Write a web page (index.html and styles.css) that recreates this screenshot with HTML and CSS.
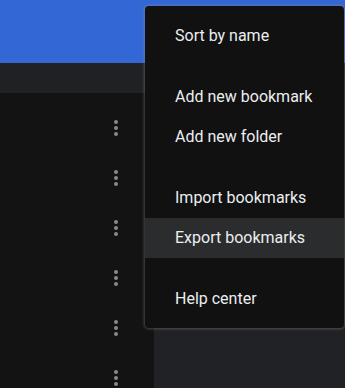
FILE: index.html
```html
<!DOCTYPE html>
<html lang="en">
<head>
  <meta charset="UTF-8">
  <title>Bookmarks</title>
  <link rel="stylesheet" href="styles.css">
</head>
<body>
  <div class="page">
    <header class="topbar"></header>
    <div class="toolbar"></div>
    <main class="content">
      <ul class="list">
        <li class="row"><span class="more"><i></i><i></i><i></i></span></li>
        <li class="row"><span class="more"><i></i><i></i><i></i></span></li>
        <li class="row"><span class="more"><i></i><i></i><i></i></span></li>
        <li class="row"><span class="more"><i></i><i></i><i></i></span></li>
        <li class="row"><span class="more"><i></i><i></i><i></i></span></li>
        <li class="row"><span class="more"><i></i><i></i><i></i></span></li>
      </ul>
      <aside class="side"></aside>
    </main>

    <div class="menu">
      <div class="item">Sort by name</div>
      <div class="sep"></div>
      <div class="item">Add new bookmark</div>
      <div class="item">Add new folder</div>
      <div class="sep"></div>
      <div class="item">Import bookmarks</div>
      <div class="item active">Export bookmarks</div>
      <div class="sep"></div>
      <div class="item">Help center</div>
    </div>
  </div>
</body>
</html>
```

FILE: styles.css
```css
html, body {
  margin: 0;
  padding: 0;
  background: #131313;
  font-family: Roboto, "Liberation Sans", sans-serif;
}
.page {
  position: relative;
  width: 345px;
  height: 388px;
  overflow: hidden;
  display: flex;
  flex-direction: column;
}
.topbar {
  flex-shrink: 0;
  height: 63px;
  background: #3367d6;
}
.toolbar {
  flex-shrink: 0;
  height: 30px;
  background: #202124;
}
.content {
  flex: 1;
  min-height: 0;
  display: flex;
}
.list {
  list-style: none;
  margin: 0;
  padding: 10px 0 0;
  width: 154px;
  background: #131313;
}
.row {
  height: 50px;
  display: flex;
  align-items: center;
  justify-content: flex-end;
  padding-right: 36px;
}
.more {
  display: flex;
  flex-direction: column;
  gap: 2px;
}
.more i {
  width: 4px;
  height: 4px;
  border-radius: 50%;
  background: #8a8a8a;
}
.side {
  flex: 1;
  background: #212225;
}
.menu {
  position: absolute;
  top: 6px;
  left: 145px;
  width: 199px;
  padding: 10px 0 9px;
  background: #111111;
  border-radius: 4px;
  box-shadow: 0 0 3px 1px rgba(140, 140, 140, 0.45);
}
.item {
  height: 40px;
  line-height: 40px;
  padding-left: 30px;
  font-size: 16px;
  color: #eceef0;
}
.item.active {
  background: #2b2c2e;
}
.sep {
  height: 21px;
}
```
